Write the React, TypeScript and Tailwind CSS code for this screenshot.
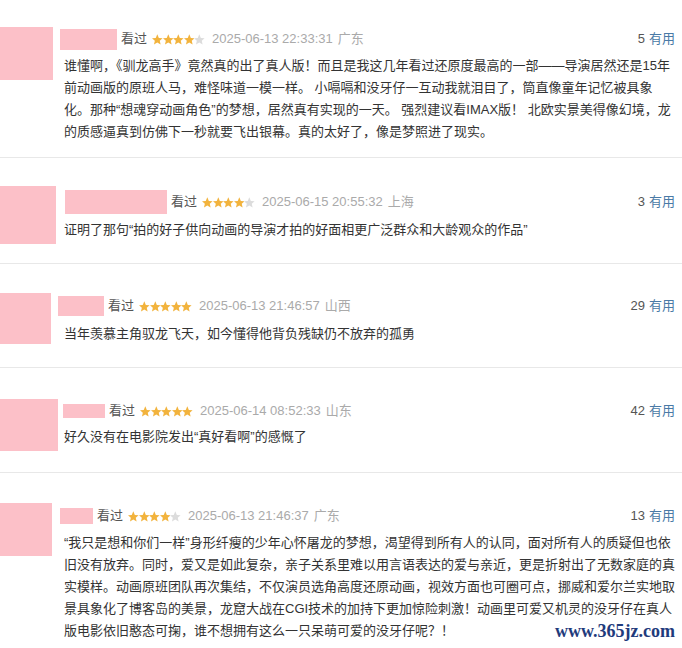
import React from 'react';

type Review = {
  rating: number;
  date: string;
  place: string;
  votes: number;
  lines: string[];
  avatar: string;
  avatarMt: string;
  name: string;
  headMt: string;
  textMt: string;
  pb: string;
  last?: boolean;
};

const reviews: Review[] = [
  {
    rating: 4,
    date: '2025-06-13 22:33:31',
    place: '广东',
    votes: 5,
    lines: [
      '谁懂啊，《驯龙高手》竟然真的出了真人版！而且是我这几年看过还原度最高的一部——导演居然还是15年',
      '前动画版的原班人马，难怪味道一模一样。 小嗝嗝和没牙仔一互动我就泪目了，筒直像童年记忆被具象',
      '化。那种“想魂穿动画角色”的梦想，居然真有实现的一天。 强烈建议看IMAX版！ 北欧实景美得像幻境，龙',
      '的质感逼真到仿佛下一秒就要飞出银幕。真的太好了，像是梦照进了现实。',
    ],
    avatar: 'w-[53px] h-[53px]',
    avatarMt: 'mt-[27px]',
    name: 'ml-[-4px] w-[57px] h-[21px]',
    headMt: 'mt-[28px]',
    textMt: 'mt-[5px]',
    pb: 'pb-[14px]',
  },
  {
    rating: 4,
    date: '2025-06-15 20:55:32',
    place: '上海',
    votes: 3,
    lines: ['证明了那句“拍的好子供向动画的导演才拍的好面相更广泛群众和大龄观众的作品”'],
    avatar: 'w-[56px] h-[58px]',
    avatarMt: 'mt-[28px]',
    name: 'ml-[1px] w-[102px] h-[24px]',
    headMt: 'mt-[33px]',
    textMt: 'mt-[6px]',
    pb: 'pb-[19px]',
  },
  {
    rating: 5,
    date: '2025-06-13 21:46:57',
    place: '山西',
    votes: 29,
    lines: ['当年羡慕主角驭龙飞天，如今懂得他背负残缺仍不放弃的孤勇'],
    avatar: 'w-[51px] h-[51px]',
    avatarMt: 'mt-[29px]',
    name: 'ml-[-6px] w-[46px] h-[20px]',
    headMt: 'mt-[31px]',
    textMt: 'mt-[6px]',
    pb: 'pb-[22px]',
  },
  {
    rating: 5,
    date: '2025-06-14 08:52:33',
    place: '山东',
    votes: 42,
    lines: ['好久没有在电影院发出“真好看啊”的感慨了'],
    avatar: 'w-[58px] h-[52px]',
    avatarMt: 'mt-[31px]',
    name: 'ml-[-1px] w-[42px] h-[14px]',
    headMt: 'mt-[32px]',
    textMt: 'mt-[4px]',
    pb: 'pb-[21px]',
  },
  {
    rating: 4,
    date: '2025-06-13 21:46:37',
    place: '广东',
    votes: 13,
    lines: [
      '“我只是想和你们一样”身形纤瘦的少年心怀屠龙的梦想，渴望得到所有人的认同，面对所有人的质疑但也依',
      '旧没有放弃。同时，爱又是如此复杂，亲子关系里难以用言语表达的爱与亲近，更是折射出了无数家庭的真',
      '实模样。动画原班团队再次集结，不仅演员选角高度还原动画，视效方面也可圈可点，挪威和爱尔兰实地取',
      '景具象化了博客岛的美景，龙窟大战在CGI技术的加持下更加惊险刺激！动画里可爱又机灵的没牙仔在真人',
      '版电影依旧憨态可掬，谁不想拥有这么一只呆萌可爱的没牙仔呢？！',
    ],
    avatar: 'w-[52px] h-[53px]',
    avatarMt: 'mt-[30px]',
    name: 'ml-[-4px] w-[33px] h-[16px]',
    headMt: 'mt-[32px]',
    textMt: 'mt-[5px]',
    pb: 'pb-[7px]',
    last: true,
  },
];

const Star: React.FC<{ on: boolean }> = ({ on }) => (
  <svg width="10.6" height="11" viewBox="1 1 22 21.5">
    <polygon
      points="12,1 15.2,8.4 23,9.1 17.1,14.3 18.9,22.3 12,18.1 5.1,22.3 6.9,14.3 1,9.1 8.8,8.4"
      fill={on ? '#f2b33d' : '#dcdcdc'}
    />
  </svg>
);

const ReviewItem: React.FC<{ r: Review }> = ({ r }) => (
  <div className={`flex items-start ${r.pb} ${r.last ? '' : 'border-b border-[#e8e8e8]'}`}>
    <div className="w-[64px] shrink-0">
      <div className={`${r.avatar} ${r.avatarMt} bg-[#fcc0c8]`} />
    </div>
    <div className={`flex-1 pr-[7px] ${r.headMt}`}>
      <div className="flex items-center h-[22px] text-[13px]">
        <div className={`${r.name} bg-[#fcc0c8] shrink-0`} />
        <span className="ml-[4px] text-[#555]">看过</span>
        <span className="ml-[5px] flex items-center">
          {[0, 1, 2, 3, 4].map((i) => (
            <Star key={i} on={i < r.rating} />
          ))}
        </span>
        <span className="ml-[7px] text-[#aaa]">{r.date}</span>
        <span className="ml-[5px] text-[#aaa]">{r.place}</span>
        <span className="ml-auto text-[#555]">{r.votes}</span>
        <span className="ml-[4px] text-[#4a7aa6]">有用</span>
      </div>
      <div className={`${r.textMt} text-[13px] leading-[22px] text-[#333]`}>
        {r.lines.map((l, i) => (
          <div key={i} className="whitespace-nowrap">
            {l}
          </div>
        ))}
      </div>
    </div>
  </div>
);

const App: React.FC = () => {
  return (
    <div
      className="relative w-[682px] h-[648px] overflow-hidden bg-white"
      style={{ fontFamily: '"Liberation Sans", "Noto Sans CJK SC", sans-serif' }}
    >
      {reviews.map((r, i) => (
        <ReviewItem key={i} r={r} />
      ))}
      {/* watermark */}
      <div className="absolute right-[7px] bottom-[3px] text-[18px] font-bold text-[#1f3b7c] font-['Liberation_Serif',serif]">
        www.365jz.com
      </div>
    </div>
  );
};

export default App;
